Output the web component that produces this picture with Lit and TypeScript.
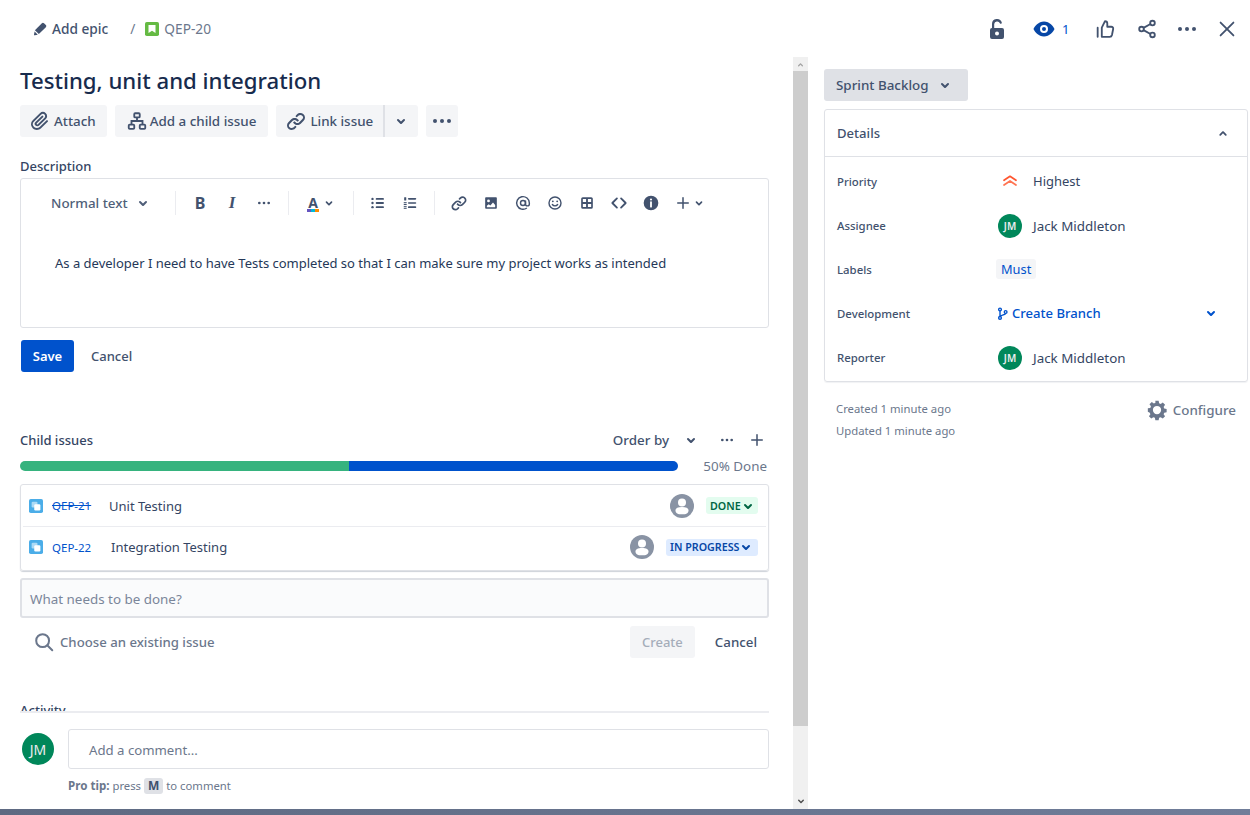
import { LitElement, html, svg, css } from 'lit';
import { customElement } from 'lit/decorators.js';

const chevronDown = 'M8.292 10.293a1.009 1.009 0 0 0 0 1.419l2.939 2.965c.218.215.5.322.779.322s.556-.107.769-.322l2.93-2.955a1.01 1.01 0 0 0 0-1.419.987.987 0 0 0-1.406 0l-2.298 2.317-2.307-2.327a.99.99 0 0 0-1.406 0z';

const icons: Record<string, any> = {
  pencil: svg`<path fill="currentColor" d="M4.02 19.23a1 1 0 0 0 1.18 1.18l3.81-.78-4.21-4.21-.78 3.81zM19.844 6.707l-2.53-2.54A1.958 1.958 0 0 0 15.91 3.58a1.978 1.978 0 0 0-1.4.587L5.172 13.5l5.33 5.33 9.34-9.32a2 2 0 0 0 .002-2.803z"/>`,
  chevron: svg`<path fill="currentColor" d=${chevronDown}/>`,
  chevronUp: svg`<path fill="currentColor" transform="rotate(180 12 12.5)" d=${chevronDown}/>`,
  more: svg`<g fill="currentColor"><circle cx="5" cy="12" r="2"/><circle cx="12" cy="12" r="2"/><circle cx="19" cy="12" r="2"/></g>`,
  attach: svg`<path fill="currentColor" d="M11.643 17.965c-1.53 1.495-4.016 1.496-5.542.004a3.773 3.773 0 0 1 .002-5.412l7.147-6.985a2.316 2.316 0 0 1 3.233-.003c.893.873.895 2.282.004 3.153l-6.703 6.55a.653.653 0 0 1-.914-.008.62.62 0 0 1 0-.902l6.229-6.087a.941.941 0 0 0 0-1.353.995.995 0 0 0-1.384 0l-6.23 6.087a2.502 2.502 0 0 0 0 3.607c1.007.99 2.672.992 3.683.005l6.703-6.55a4.074 4.074 0 0 0-.003-5.859 4.306 4.306 0 0 0-6.002.003l-7.148 6.985a5.655 5.655 0 0 0-.001 8.118c2.29 2.239 6.015 2.238 8.31-.005l6.686-6.533a.941.941 0 0 0 0-1.353.995.995 0 0 0-1.384 0l-6.686 6.533z"/>`,
  hierarchy: svg`<g fill="none" stroke="currentColor" stroke-width="2"><rect x="9" y="3.5" width="6" height="4.5" rx="1"/><rect x="3" y="16" width="6" height="4.5" rx="1"/><rect x="15" y="16" width="6" height="4.5" rx="1"/><path d="M12 8v4M6 16v-4h12v4"/></g>`,
  link: svg`<g fill="currentColor"><path d="M12.856 5.457l-.937.92a1.002 1.002 0 0 0 0 1.437 1.047 1.047 0 0 0 1.463 0l.984-.966c.967-.95 2.542-1.135 3.602-.288a2.54 2.54 0 0 1 .203 3.81l-2.903 2.852a2.646 2.646 0 0 1-3.696 0l-1.11-1.09L9 13.57l1.108 1.089c1.822 1.788 4.802 1.788 6.622 0l2.905-2.852a4.558 4.558 0 0 0-.357-6.82c-1.893-1.517-4.695-1.226-6.422.47"/><path d="M11.144 19.543l.937-.92a1.002 1.002 0 0 0 0-1.437 1.047 1.047 0 0 0-1.462 0l-.985.966c-.967.95-2.542 1.135-3.602.288a2.54 2.54 0 0 1-.203-3.81l2.903-2.852a2.646 2.646 0 0 1 3.696 0l1.11 1.09L15 11.43l-1.108-1.089c-1.822-1.788-4.802-1.788-6.622 0l-2.905 2.852a4.558 4.558 0 0 0 .357 6.82c1.893 1.517 4.695 1.226 6.422-.47"/></g>`,
  bullets: svg`<g fill="currentColor"><circle cx="6" cy="7.5" r="1.3"/><circle cx="6" cy="12" r="1.3"/><circle cx="6" cy="16.5" r="1.3"/><rect x="9.5" y="6.5" width="9" height="2" rx="1"/><rect x="9.5" y="11" width="9" height="2" rx="1"/><rect x="9.5" y="15.5" width="9" height="2" rx="1"/></g>`,
  numbers: svg`<g fill="currentColor"><rect x="5" y="5" width="2.5" height="4" rx=".4"/><rect x="4.5" y="11" width="3.5" height="1.3"/><rect x="4.5" y="13.2" width="3.5" height="1.3"/><rect x="4.5" y="15.8" width="3.5" height="1.2"/><rect x="4.5" y="17.8" width="3.5" height="1.2"/><rect x="9.5" y="6" width="10" height="2" rx="1"/><rect x="9.5" y="11" width="10" height="2" rx="1"/><rect x="9.5" y="16" width="10" height="2" rx="1"/></g>`,
  image: svg`<path fill="currentColor" fill-rule="evenodd" d="M6 5h12a1 1 0 0 1 1 1v12a1 1 0 0 1-1 1H6a1 1 0 0 1-1-1V6a1 1 0 0 1 1-1zm3 6.2a1.7 1.7 0 1 0 0-3.4 1.7 1.7 0 0 0 0 3.4zM7 17h10v-2.6l-2.6-2.9-3.2 3.6-1.9-1.6L7 15.4z"/>`,
  at: svg`<g fill="none" stroke="currentColor" stroke-width="1.7"><circle cx="12" cy="12" r="3"/><path d="M15 9v4.2a2.3 2.3 0 0 0 4.6 0V12a7.6 7.6 0 1 0-3 6"/></g>`,
  emoji: svg`<g><circle cx="12" cy="12" r="7.2" fill="none" stroke="currentColor" stroke-width="1.7"/><circle cx="9.4" cy="10" r="1.1" fill="currentColor"/><circle cx="14.6" cy="10" r="1.1" fill="currentColor"/><path d="M8.8 13.8c1.6 2.3 4.8 2.3 6.4 0" fill="none" stroke="currentColor" stroke-width="1.6" stroke-linecap="round"/></g>`,
  table: svg`<path fill="currentColor" fill-rule="evenodd" d="M7 5h10a2 2 0 0 1 2 2v10a2 2 0 0 1-2 2H7a2 2 0 0 1-2-2V7a2 2 0 0 1 2-2zm0 2.2v3.7h3.9V7.2zm6.1 0v3.7H17V7.2zM7 13.1v3.7h3.9v-3.7zm6.1 0v3.7H17v-3.7z"/>`,
  code: svg`<path fill="none" stroke="currentColor" stroke-width="2.2" stroke-linecap="round" stroke-linejoin="round" d="M9.5 6.5L4 12l5.5 5.5M14.5 6.5L20 12l-5.5 5.5"/>`,
  info: svg`<path fill="currentColor" fill-rule="evenodd" d="M12 4a8 8 0 1 1 0 16 8 8 0 0 1 0-16zm-1 7v5a1 1 0 0 0 2 0v-5a1 1 0 0 0-2 0zm1-4a1.2 1.2 0 1 0 0 2.4A1.2 1.2 0 0 0 12 7z"/>`,
  plus: svg`<path fill="currentColor" d="M13 11V5a1 1 0 0 0-2 0v6H5a1 1 0 0 0 0 2h6v6a1 1 0 0 0 2 0v-6h6a1 1 0 0 0 0-2z"/>`,
  lock: svg`<path fill="currentColor" fill-rule="evenodd" d="M7 11V7a5 5 0 0 1 9.8-1.4 1 1 0 0 1-1.9.6A3 3 0 0 0 9.2 7v4H17a2 2 0 0 1 2 2v7a2 2 0 0 1-2 2H7a2 2 0 0 1-2-2v-7a2 2 0 0 1 2-2zm5 7.6a2 2 0 1 0 0-4 2 2 0 0 0 0 4z"/>`,
  eye: svg`<path fill="currentColor" fill-rule="evenodd" d="M12 4.5c5.5 0 9.5 5 10.5 7.5-1 2.5-5 7.500-10.500 7.500S2.500 14.500 1.500 12C2.500 9.500 6.500 4.500 12 4.500zm0 3.500a4 4 0 1 0 0 8 4 4 0 0 0 0-8zm0 2a2 2 0 1 1 0 4 2 2 0 0 1 0-4z"/>`,
  like: svg`<path fill="none" stroke="currentColor" stroke-width="2" stroke-linejoin="round" stroke-linecap="round" d="M8.500 10.500L12 3.500c1.600 0 2.500 1.100 2.500 2.600V9.500h4.300c1.400 0 2.400 1.200 2.100 2.500l-1.300 6.500c-.3 1.200-1.200 2-2.400 2H8.500zM4 10.500v10"/>`,
  share: svg`<g fill="none" stroke="currentColor" stroke-width="2"><circle cx="18" cy="5.500" r="2.500"/><circle cx="6" cy="12" r="2.500"/><circle cx="18" cy="18.500" r="2.500"/><path d="M8.200 10.800l7.600-4.200M8.200 13.200l7.600 4.200"/></g>`,
  close: svg`<path fill="none" stroke="currentColor" stroke-width="2" stroke-linecap="round" d="M5 5l14 14M19 5L5 19"/>`,
  branch: svg`<g fill="none" stroke="currentColor" stroke-width="2.200"><circle cx="8" cy="5.500" r="2.200"/><circle cx="8" cy="19" r="2.200"/><circle cx="17" cy="9.500" r="2.200"/><path d="M8 7.700v9.100M17 11.700c0 3.300-9 2.500-9 5.100"/></g>`,
  gear: svg`<path fill="currentColor" fill-rule="evenodd" d="M10.200 2h3.600l.5 2.700 1.700.7 2.300-1.600 2.500 2.500-1.600 2.300.7 1.700 2.600.5v3.600l-2.600.5-.7 1.700 1.600 2.300-2.500 2.500-2.300-1.600-1.700.7-.5 2.600h-3.600l-.5-2.600-1.700-.7-2.300 1.600-2.500-2.500 1.600-2.300-.7-1.700L2 13.800v-3.600l2.700-.5.7-1.700-1.600-2.300 2.500-2.500 2.300 1.600 1.700-.7zM12 7.500a4.500 4.500 0 1 0 0 9 4.500 4.500 0 0 0 0-9z"/>`,
  search: svg`<g fill="none" stroke="currentColor" stroke-width="2.200" stroke-linecap="round"><circle cx="10.500" cy="10.500" r="7"/><path d="M15.800 15.800l5.200 5.200"/></g>`,
  person: svg`<circle cx="12" cy="12" r="12" fill="#8993a4"/><circle cx="12" cy="8.500" r="4" fill="#fff"/><path fill="#fff" d="M5.500 16.500c0-2.200 2-3.500 6.500-3.500s6.500 1.300 6.500 3.500c0 3-2.500 3.800-6.500 3.800s-6.500-.8-6.500-3.800z"/>`,
  story: svg`<rect width="24" height="24" rx="3" fill="#65ba43"/><path fill="#fff" d="M6 5h12v14l-6-4-6 4z"/>`,
  subtask: svg`<rect width="24" height="24" rx="3" fill="#4bade8"/><rect x="4.500" y="4.500" width="10" height="10" rx="2" fill="#fff" fill-opacity=".55"/><rect x="9" y="9" width="10.500" height="10.500" rx="2" fill="#fff"/>`,
  highest: svg`<g fill="none" stroke-width="2.600" stroke-linecap="round" stroke-linejoin="round"><path stroke="#ff5630" d="M3 11L12 5l9 6"/><path stroke="#ff7452" d="M3 18L12 12l9 6"/></g>`,
};

const icon = (name: string, size = 24, cls = '') =>
  html`<svg class="icon ${cls}" width=${size} height=${size} viewBox="0 0 24 24">${icons[name]}</svg>`;

@customElement('app-root')
export class AppRoot extends LitElement {
  static styles = css`
    :host {
      display: flex;
      flex-direction: column;
      height: 815px;
      overflow: hidden;
      background: #fff;
      color: #172b4d;
      font-family: 'Noto Sans', sans-serif;
      font-size: 13.4px;
    }
    * { box-sizing: border-box; }
    .icon { display: block; flex: none; }
    .topbar {
      height: 57px;
      flex: none;
      display: flex;
      align-items: center;
      justify-content: space-between;
      padding: 0 3px 0 31px;
    }
    .crumbs { display: flex; align-items: center; color: #42526e; font-size: 13.7px; }
    .crumbs .epic { font-weight: 500; margin-left: 3px; }
    .crumbs .slash { color: #6b778c; margin: 0 10px 0 22px; }
    .crumbs .key { color: #6b778c; margin-left: 5px; }
    .actions { display: flex; align-items: center; color: #42526e; }
    .actions .watch { color: #0747a6; display: flex; align-items: center; margin-left: 15px; width: 53px; }
    .actions .watch span { color: #0052cc; margin-left: 6px; font-size: 13px; }
    .actions .slot { width: 40px; display: flex; justify-content: center; }
    .actions .slot.like { margin-right: 2px; }

    .body { flex: 1; display: flex; min-height: 0; }
    .left { width: 793px; flex: none; padding: 0 24px 0 20px; display: flex; flex-direction: column; }
    .title { font-size: 22.2px; font-weight: 500; line-height: 28px; margin: 10px 0 10px; color: #172b4d; }
    .btns { display: flex; gap: 8px; }
    .btn {
      height: 32px;
      background: #f4f5f7;
      border-radius: 3px;
      display: flex;
      align-items: center;
      color: #42526e;
      font-weight: 500;
      padding: 0 11px 0 8px;
      gap: 2px;
      white-space: nowrap;
    }
    .btn.child { padding: 0 12px 0 11px; }
    .btn.link-main { border-radius: 3px 0 0 3px; border-right: 2px solid #dfe1e6; width: 109px; }
    .btn.link-more { border-radius: 0 3px 3px 0; padding: 0 4px; margin-left: -8px; width: 33px; }
    .btn.more-btn { padding: 0 4px; }
    .desc-label { margin-top: 19px; font-size: 13px; font-weight: 500; color: #344563; line-height: 20px; }
    .editor { margin-top: 2px; height: 150px; width: 749px; border: 1px solid #dfe1e6; border-radius: 3px; }
    .toolbar { height: 48px; display: flex; align-items: center; color: #42526e; }
    .heading { width: 154px; padding-left: 30px; display: flex; align-items: center; gap: 3px; font-weight: 500; color: #505f79; }
    .sep { width: 1px; height: 24px; background: #ebecf0; margin: 0 8px; flex: none; }
    .heading + .sep { margin-left: 0; }
    .tool { width: 32px; height: 24px; display: flex; align-items: center; justify-content: center; flex: none; }
    .tool.wide { width: 48px; justify-content: flex-start; padding-left: 6px; }
    .tool .letter { font-size: 16px; font-weight: 700; line-height: 20px; }
    .tool .letter.ital { font-style: italic; font-family: 'Liberation Serif', serif; font-size: 17px; }
    .tool .a-mark { position: relative; width: 20px; text-align: center; font-size: 14px; font-weight: 700; line-height: 18px; }
    .tool .a-mark::after {
      content: '';
      position: absolute;
      left: 4px;
      right: 4px;
      bottom: 0;
      height: 3px;
      background: linear-gradient(90deg, #6554c0 33%, #00b8d9 33% 66%, #ff8b00 66%);
    }
    .tool .chev { margin-left: -4px; }
    .tool .plus-mark { margin: 0 1px; }
    .editor-text { padding: 26px 0 0 34px; font-size: 13px; line-height: 20px; color: #253858; }
    .form-actions { display: flex; align-items: center; margin-top: 12px; padding-left: 1px; font-size: 13px; }
    .save { background: #0052cc; color: #fff; font-weight: 600; height: 32px; width: 53px; border-radius: 3px; display: flex; align-items: center; justify-content: center; }
    .cancel { font-weight: 500; color: #42526e; margin-left: 17px; }

    .child-head { margin-top: 58px; height: 20px; display: flex; align-items: center; width: 749px; }
    .child-head .name { font-weight: 500; font-size: 13px; color: #344563; flex: 1; }
    .child-head .order { font-weight: 500; color: #42526e; }
    .child-head .tools { display: flex; align-items: center; color: #42526e; margin-right: -4px; }
    .child-head .tool.order-chev { margin-left: 6px; }
    .child-head .tool.order-more { margin-left: 4px; }
    .child-head .tool.order-add { margin-left: -2px; }
    .progress { display: flex; align-items: center; margin-top: 6px; width: 749px; height: 20px; }
    .bar { width: 658px; height: 10px; border-radius: 5px; overflow: hidden; display: flex; }
    .bar .done { width: 50%; background: #36b37e; }
    .bar .open { width: 50%; background: #0052cc; }
    .progress .pct { margin-left: auto; color: #6b778c; margin-right: 2px; }
    .list { margin-top: 8px; width: 749px; height: 87px; border: 1px solid #dfe1e6; border-radius: 3px; box-shadow: 0 1px 1px rgba(9,30,66,.2); }
    .row { height: 41px; display: flex; align-items: center; padding: 0 10px 0 8px; }
    .row + .row { height: 44px; border-top: 1px solid #ebecf0; margin: 0 2px; padding: 0 8px 3px 6px; }
    .row .key { color: #0052cc; font-size: 11.5px; margin-left: 9px; width: 39px; white-space: nowrap; }
    .row .key.done { text-decoration: line-through; }
    .row .name { color: #344563; font-size: 13px; margin-left: 18px; flex: 1; }
    .row .name.shifted { margin-left: 20px; }
    .loz { margin-left: 12px; height: 17px; border-radius: 3px; display: flex; align-items: center; font-size: 10.7px; font-weight: 600; padding: 0 0 0 4px; white-space: nowrap; }
    .loz .icon { margin: 0 -10px 0 -5px; }
    .loz.green { background: #e3fcef; color: #006644; width: 52px; }
    .loz.blue { background: #deebff; color: #0747a6; width: 92px; }
    .add-input { margin-top: 7px; width: 749px; height: 40px; border: 2px solid #dfe1e6; border-radius: 3px; background: #fafbfc; color: #7a869a; display: flex; align-items: center; padding: 1px 0 0 8px; }
    .add-actions { margin-top: 8px; width: 749px; height: 32px; display: flex; align-items: center; padding-left: 13px; color: #6b778c; font-weight: 500; font-size: 13.2px; }
    .add-actions .choose { margin-left: 5px; flex: 1; }
    .create { width: 65px; height: 32px; background: #f4f5f7; color: #a5adba; border-radius: 3px; display: flex; align-items: center; justify-content: center; font-size: 13px; }
    .add-actions .cancel { margin: 0 12px 0 20px; font-size: 13.3px; }
    .activity { margin-top: 45px; height: 8px; overflow: hidden; font-weight: 500; font-size: 13px; color: #344563; line-height: 15px; }
    .activity-line { height: 2px; width: 749px; background: #ebecf0; }
    .comment { display: grid; grid-template-columns: 48px 701px; margin-top: 16px; }
    .avatar { border-radius: 50%; background: #00875a; color: #ebecf0; display: flex; align-items: center; justify-content: center; flex: none; }
    .avatar.big { width: 32px; height: 32px; margin: 4px 0 0 2px; font-size: 14px; }
    .avatar.small { width: 24px; height: 24px; font-size: 10px; font-weight: 600; margin-left: 3px; }
    .comment-box { height: 40px; border: 1px solid #dfe1e6; border-radius: 3px; display: flex; align-items: center; padding: 1px 0 0 20px; color: #6b778c; font-size: 13.2px; }
    .tip { grid-column: 2; margin-top: 9px; font-size: 11.3px; color: #6b778c; display: flex; align-items: center; line-height: 16px; white-space: pre; }
    .tip b { font-weight: 700; font-size: 11.6px; }
    .tip kbd { font-family: inherit; font-size: 12px; font-weight: 700; background: #dfe1e6; color: #42526e; border-radius: 3px; padding: 0 4px; }

    .scroll { width: 15px; flex: none; background: #f0f0f0; display: flex; flex-direction: column; justify-content: space-between; }
    .scroll .cap { height: 14px; display: flex; align-items: center; justify-content: center; color: #a3a3a3; }
    .scroll .cap.down { color: #505050; height: 17px; }
    .scroll .thumb { height: 655px; background: #cdcdcd; }

    .right { flex: 1; padding: 12px 2px 0 16px; }
    .status { width: 144px; height: 32px; background: #dfe1e6; border-radius: 3px; display: flex; align-items: center; padding-left: 12px; color: #42526e; font-weight: 500; gap: 4px; }
    .card { margin-top: 8px; height: 273px; border: 1px solid #dfe1e6; border-radius: 3px; box-shadow: 0 1px 1px rgba(9,30,66,.06); }
    .card-head { height: 47px; border-bottom: 1px solid #dfe1e6; display: flex; align-items: center; justify-content: space-between; padding: 0 13px 0 12px; font-weight: 500; color: #42526e; font-size: 13.1px; }
    .rows { padding-top: 3px; }
    .field { height: 44px; display: grid; grid-template-columns: 158px 1fr; align-items: center; padding-left: 12px; }
    .field .label { font-size: 11.4px; font-weight: 500; color: #42526e; padding-bottom: 2px; }
    .value { display: flex; align-items: center; color: #344563; font-size: 13.4px; }
    .value .name { margin-left: 11px; }
    .value .prio { margin-left: 7px; }
    .value .lvl { margin-left: 15px; font-size: 13px; }
    .value.nudge { padding-bottom: 2px; }
    .chip { background: #f4f5f7; color: #0052cc; border-radius: 3px; height: 20px; display: flex; align-items: center; padding: 0 5px 1px; margin-left: 1px; font-size: 12.8px; }
    .branch { color: #0052cc; font-weight: 500; flex: 1; gap: 2px; font-size: 13.1px; }
    .branch .go { margin-right: 24px; margin-left: auto; }
    .meta { display: flex; justify-content: space-between; padding: 16px 12px 0 12px; }
    .dates { font-size: 11.3px; line-height: 22px; color: #6b778c; }
    .configure { display: flex; align-items: center; gap: 5px; color: #6b778c; font-weight: 500; height: 22px; margin-top: 1px; }
    .strip { height: 6px; flex: none; background: linear-gradient(90deg, #5e6a82, #707d99); }
  `;

  render() {
    return html`
      <div class="topbar">
        <div class="crumbs">
          ${icon('pencil', 18)}
          <span class="epic">Add epic</span>
          <span class="slash">/</span>
          ${icon('story', 14)}
          <span class="key">QEP-20</span>
        </div>
        <div class="actions">
          <div class="slot">${icon('lock', 24)}</div>
          <div class="watch">${icon('eye', 24)}<span>1</span></div>
          <div class="slot like">${icon('like', 22)}</div>
          <div class="slot">${icon('share', 22)}</div>
          <div class="slot">${icon('more', 24)}</div>
          <div class="slot">${icon('close', 22)}</div>
        </div>
      </div>
      <div class="body">
        <div class="left">
          <div class="title">Testing, unit and integration</div>
          <div class="btns">
            <div class="btn">${icon('attach', 24)}Attach</div>
            <div class="btn child">${icon('hierarchy', 22)}Add a child issue</div>
            <div class="btn link-main">${icon('link', 24)}Link issue</div>
            <div class="btn link-more">${icon('chevron', 24)}</div>
            <div class="btn more-btn">${icon('more', 24)}</div>
          </div>
          <div class="desc-label">Description</div>
          <div class="editor">
            <div class="toolbar">
              <div class="heading">Normal text ${icon('chevron', 24)}</div>
              <div class="sep"></div>
              <div class="tool"><span class="letter">B</span></div>
              <div class="tool"><span class="letter ital">I</span></div>
              <div class="tool">${icon('more', 16)}</div>
              <div class="sep"></div>
              <div class="tool wide"><span class="a-mark">A</span>${icon('chevron', 20, 'chev')}</div>
              <div class="sep"></div>
              <div class="tool">${icon('bullets', 22)}</div>
              <div class="tool">${icon('numbers', 20)}</div>
              <div class="sep"></div>
              <div class="tool">${icon('link', 20)}</div>
              <div class="tool">${icon('image', 20)}</div>
              <div class="tool">${icon('at', 20)}</div>
              <div class="tool">${icon('emoji', 20)}</div>
              <div class="tool">${icon('table', 20)}</div>
              <div class="tool">${icon('code', 20)}</div>
              <div class="tool">${icon('info', 22)}</div>
              <div class="tool wide">${icon('plus', 18, 'plus-mark')}${icon('chevron', 20, 'chev')}</div>
            </div>
            <div class="editor-text">As a developer I need to have Tests completed so that I can make sure my project works as intended</div>
          </div>
          <div class="form-actions">
            <div class="save">Save</div>
            <div class="cancel">Cancel</div>
          </div>

          <div class="child-head">
            <div class="name">Child issues</div>
            <div class="order">Order by</div>
            <div class="tools">
              <div class="tool order-chev">${icon('chevron', 24)}</div>
              <div class="tool order-more">${icon('more', 16)}</div>
              <div class="tool order-add">${icon('plus', 18)}</div>
            </div>
          </div>
          <div class="progress">
            <div class="bar"><div class="done"></div><div class="open"></div></div>
            <div class="pct">50% Done</div>
          </div>
          <div class="list">
            <div class="row">
              ${icon('subtask', 14)}
              <span class="key done">QEP-21</span>
              <span class="name">Unit Testing</span>
              ${icon('person', 24)}
              <span class="loz green">DONE${icon('chevron', 24)}</span>
            </div>
            <div class="row">
              ${icon('subtask', 14)}
              <span class="key">QEP-22</span>
              <span class="name shifted">Integration Testing</span>
              ${icon('person', 24)}
              <span class="loz blue">IN PROGRESS${icon('chevron', 24)}</span>
            </div>
          </div>
          <div class="add-input">What needs to be done?</div>
          <div class="add-actions">
            ${icon('search', 22)}
            <span class="choose">Choose an existing issue</span>
            <div class="create">Create</div>
            <div class="cancel">Cancel</div>
          </div>
          <div class="activity">Activity</div>
          <div class="activity-line"></div>
          <div class="comment">
            <div class="avatar big">JM</div>
            <div class="comment-box">Add a comment...</div>
            <div class="tip"><b>Pro tip:</b> press <kbd>M</kbd> to comment</div>
          </div>
        </div>
        <div class="scroll">
          <div>
            <div class="cap">${icon('chevronUp', 15)}</div>
            <div class="thumb"></div>
          </div>
          <div class="cap down">${icon('chevron', 18)}</div>
        </div>
        <div class="right">
          <div class="status">Sprint Backlog ${icon('chevron', 24)}</div>
          <div class="card">
            <div class="card-head">Details ${icon('chevronUp', 22)}</div>
            <div class="rows">
              <div class="field"><span class="label">Priority</span><div class="value nudge"><span class="prio">${icon('highest', 16)}</span><span class="lvl">Highest</span></div></div>
              <div class="field"><span class="label">Assignee</span><div class="value"><div class="avatar small">JM</div><span class="name">Jack Middleton</span></div></div>
              <div class="field"><span class="label">Labels</span><div class="value nudge"><span class="chip">Must</span></div></div>
              <div class="field"><span class="label">Development</span><div class="value nudge branch">${icon('branch', 15)}<span>Create Branch</span>${icon('chevron', 24, 'go')}</div></div>
              <div class="field"><span class="label">Reporter</span><div class="value"><div class="avatar small">JM</div><span class="name">Jack Middleton</span></div></div>
            </div>
          </div>
          <div class="meta">
            <div class="dates"><div>Created 1 minute ago</div><div>Updated 1 minute ago</div></div>
            <div class="configure">${icon('gear', 22)}Configure</div>
          </div>
        </div>
      </div>
      <div class="strip"></div>
    `;
  }
}
